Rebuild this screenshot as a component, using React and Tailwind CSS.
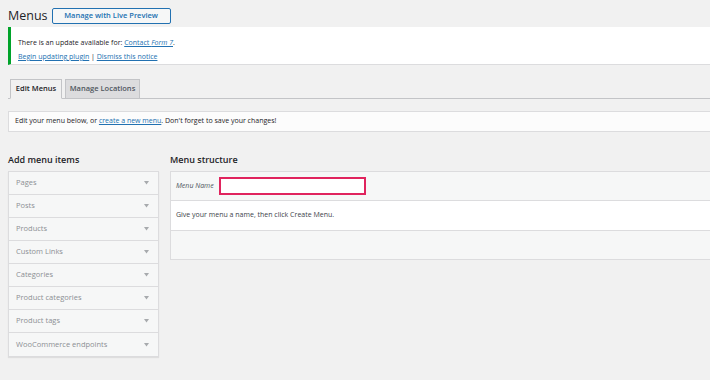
import { useState } from "react";

const items = [
  "Pages",
  "Posts",
  "Products",
  "Custom Links",
  "Categories",
  "Product categories",
  "Product tags",
  "WooCommerce endpoints",
];

function Arrow() {
  return (
    <svg width="5" height="4" viewBox="0 0 5 4" className="mr-[9px]">
      <path d="M0 0 L5 0 L2.5 3.5 Z" fill="#a7aaad" />
    </svg>
  );
}

function App() {
  const [menuName, setMenuName] = useState("");

  return (
    <div
      className="w-[710px] h-[380px] overflow-hidden bg-[#f1f1f1] pl-2 text-[#1d2327]"
      style={{ fontFamily: '"Open Sans", "Noto Sans", Arial, sans-serif' }}
    >
      {/* title */}
      <div className="flex items-center gap-[4px] pt-[8px] h-[24px]">
        <h1 className="text-[12.5px] leading-none font-normal">Menus</h1>
        <button className="h-[16px] w-[119px] border border-[#2271b1] rounded-[2px] bg-[#f6f7f7] text-[#2271b1] text-[7.5px] font-semibold leading-none">
          Manage with Live Preview
        </button>
      </div>

      {/* notice */}
      <div className="mt-[3px] h-[38px] bg-white border-l-[3px] border-[#00a32a] border-b border-b-[#dcdcde] pl-[7px] pt-[11px] flex flex-col gap-[5px] text-[7px] leading-[9px]">
        <p>
          There is an update available for:{" "}
          <a className="text-[#2271b1] underline">
            Contact <em>Form 7</em>
          </a>
          .
        </p>
        <p>
          <a className="text-[#2271b1] underline">Begin updating plugin</a> |{" "}
          <a className="text-[#2271b1] underline">Dismiss this notice</a>
        </p>
      </div>

      {/* tabs */}
      <div className="mt-[14px] h-[20px] flex items-end gap-[3px] pl-[2px] border-b border-[#c3c4c7]">
        <div className="h-[20px] -mb-px w-[52px] flex items-center justify-center border border-[#c3c4c7] border-b-[#f1f1f1] bg-[#f1f1f1] text-[7.5px] font-semibold">
          Edit Menus
        </div>
        <div className="h-[19px] w-[75px] flex items-center justify-center border border-[#c3c4c7] border-b-0 bg-[#dcdcde] text-[7.5px] font-semibold text-[#50575e]">
          Manage Locations
        </div>
      </div>

      {/* info box */}
      <div className="mt-[12px] h-[21px] bg-[#fcfcfc] border border-r-0 border-[#dcdcde] pl-[6px] flex items-center text-[7px]">
        <span>
          Edit your menu below, or{" "}
          <a className="text-[#2271b1] underline">create a new menu</a>. Don't
          forget to save your changes!
        </span>
      </div>

      {/* columns */}
      <div className="mt-[21px] flex gap-[11px]">
        <div className="w-[151px] shrink-0">
          <h2 className="h-[18px] pt-[1px] text-[9px] font-semibold leading-[12px]">
            Add menu items
          </h2>
          <div className="border border-[#dcdcde] shadow-[0_1px_1px_rgba(0,0,0,0.08)]">
            {items.map((it, i) => (
              <div
                key={it}
                className={
                  "h-[23px] bg-[#f6f7f7] flex items-center justify-between pl-[7px] text-[7.5px] text-[#8c8f94] " +
                  (i < items.length - 1 ? "border-b border-[#dcdcde]" : "")
                }
              >
                <span>{it}</span>
                <Arrow />
              </div>
            ))}
          </div>
        </div>

        <div className="flex-1">
          <h2 className="h-[18px] pt-[1px] text-[9px] font-semibold leading-[12px]">
            Menu structure
          </h2>
          <div className="border border-r-0 border-[#dcdcde]">
            <div className="h-[29px] bg-[#f6f7f7] border-b border-[#dcdcde] flex items-center pl-[5px]">
              <label className="italic font-normal text-[7px] text-[#50575e] w-[43px]">
                Menu Name
              </label>
              <input
                value={menuName}
                onChange={(e) => setMenuName(e.target.value)}
                className="w-[147px] h-[18px] bg-white border-2 border-[#e0245e] outline-none"
              />
            </div>
            <div className="h-[29px] bg-white flex items-center pl-[5px] text-[7px] text-[#3c434a]">
              Give your menu a name, then click Create Menu.
            </div>
            <div className="h-[29px] bg-[#f6f7f7] border-t border-[#dcdcde]"></div>
          </div>
        </div>
      </div>
    </div>
  );
}

export default App;
